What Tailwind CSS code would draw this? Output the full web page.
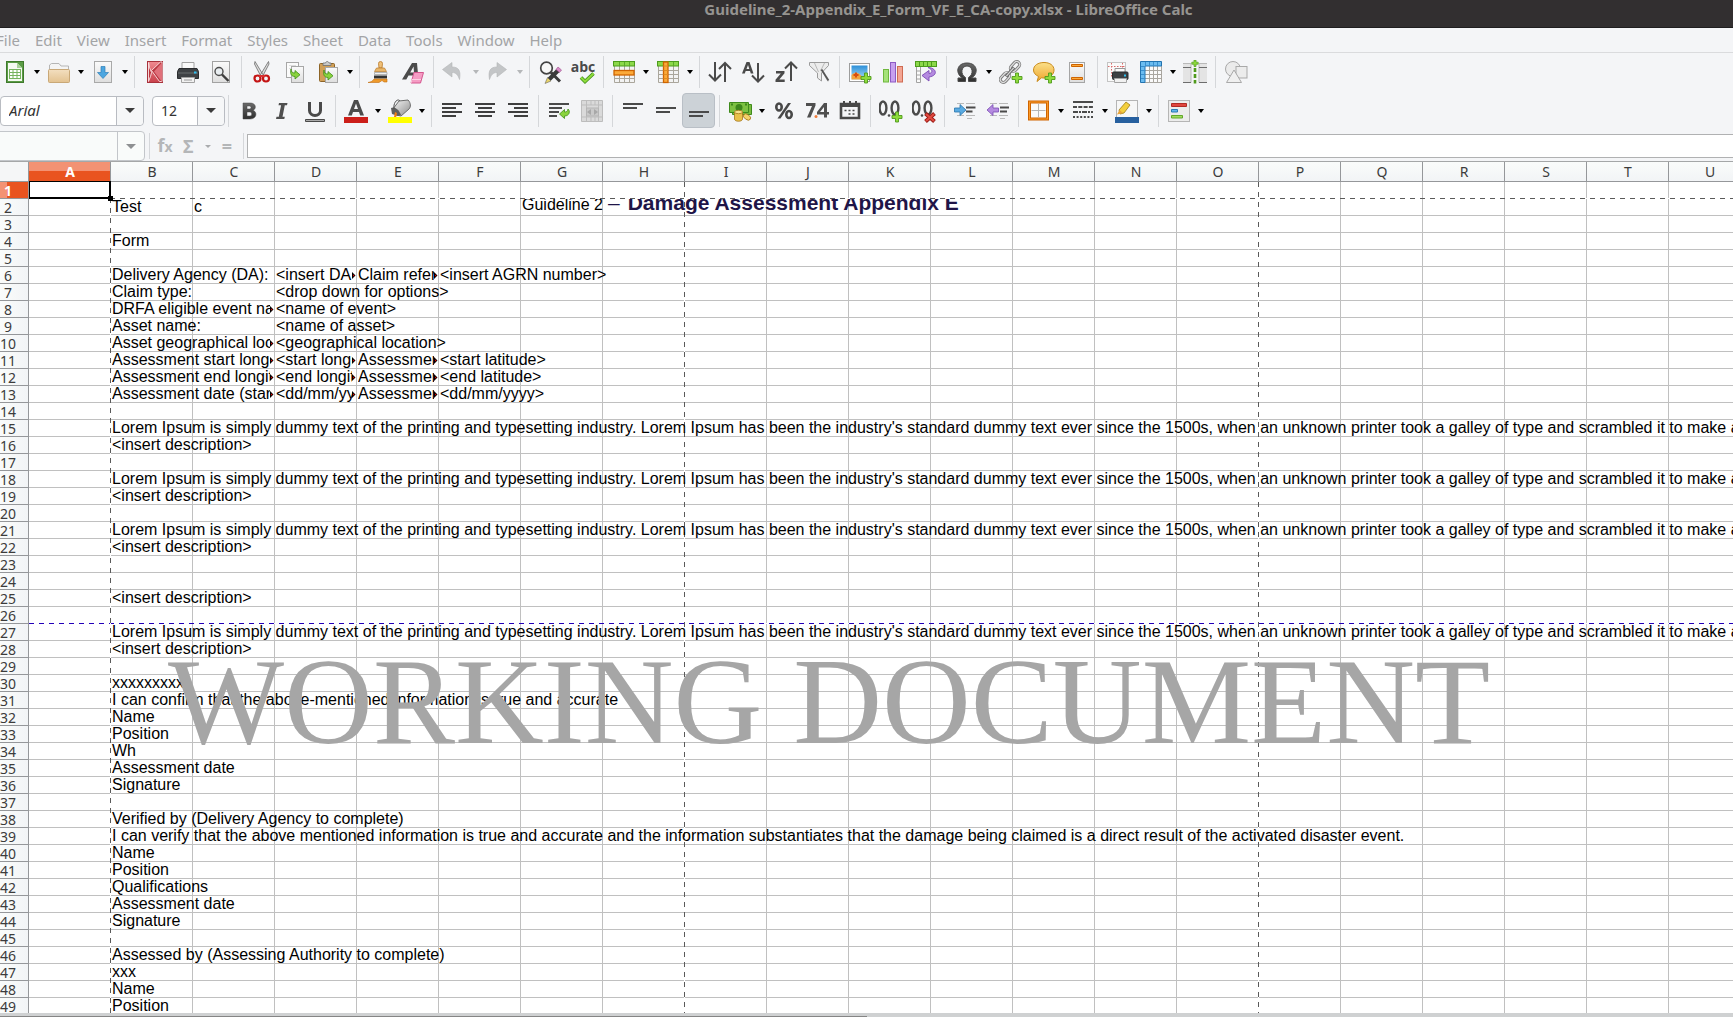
<!DOCTYPE html>
<html lang="en">
<head>
<meta charset="utf-8">
<title>Guideline_2-Appendix_E_Form_VF_E_CA-copy.xlsx - LibreOffice Calc</title>
<script src="https://cdn.jsdelivr.net/npm/@tailwindcss/browser@4"></script>
</head>
<body class="flex h-screen flex-col overflow-hidden bg-[#f4f5f7] font-['Noto_Sans',sans-serif] text-[#3c3c3c]">

<svg class="absolute size-0" aria-hidden="true">
  <defs>
    <linearGradient id="page" x1="0" y1="0" x2="0" y2="1"><stop offset="0" stop-color="#fbfbfb"/><stop offset="1" stop-color="#dedede"/></linearGradient>
    <linearGradient id="steel" x1="0" y1="0" x2="1" y2="1"><stop offset="0" stop-color="#f6f6f6"/><stop offset="1" stop-color="#8d8d8d"/></linearGradient>
    <linearGradient id="tan" x1="0" y1="0" x2="0" y2="1"><stop offset="0" stop-color="#f3dfc0"/><stop offset="1" stop-color="#e3c290"/></linearGradient>
    <linearGradient id="red" x1="0" y1="0" x2="0" y2="1"><stop offset="0" stop-color="#ef8a90"/><stop offset="1" stop-color="#c9414b"/></linearGradient>
    <linearGradient id="sky" x1="0" y1="0" x2="0" y2="1"><stop offset="0" stop-color="#2d8fd8"/><stop offset="1" stop-color="#a8dcf6"/></linearGradient>
    <linearGradient id="gold" x1="0" y1="0" x2="0" y2="1"><stop offset="0" stop-color="#fbe08a"/><stop offset="1" stop-color="#eda52c"/></linearGradient>
    <linearGradient id="ink" x1="0" y1="0" x2="0" y2="1"><stop offset="0" stop-color="#6a6a6a"/><stop offset="1" stop-color="#2e2e2e"/></linearGradient>
    <g id="plus"><path d="M3.500 0h3v3.500h3.500v3h-3.500v3.500h-3v-3.500h-3.500v-3h3.500z" fill="#8edb3c" stroke="#4f9a1c" stroke-width=".9"/></g>
    <g id="zero"><ellipse cx="4.500" cy="8" rx="3.400" ry="6.500" fill="none" stroke="#4a4a4a" stroke-width="2.400"/></g>
  </defs>

  <symbol id="i-new" viewBox="0 0 24 24"><rect x="3.500" y="1.500" width="17" height="21" fill="#5b9c46" stroke="#3f7a2c"/><path d="M5 3h9l5 5v13H5z" fill="#f5faf2"/><path d="M14 3v5h5z" fill="#a9d39a"/><rect x="6.500" y="9.500" width="11" height="9" fill="#fff" stroke="#76b35f"/><path d="M6.500 12.500h11M6.500 15.500h11M10 9.500v9M14 9.500v9" stroke="#76b35f"/></symbol>
  <symbol id="i-open" viewBox="0 0 24 24"><path d="M2.500 20V5l2-1.500H12L14 6h7.500v14z" fill="#f4f4f4" stroke="#b5b5b5"/><rect x="1.500" y="9.500" width="21" height="13" rx="1" fill="url(#tan)" stroke="#c9a877"/></symbol>
  <symbol id="i-save" viewBox="0 0 24 24"><rect x="3.500" y="1.500" width="17" height="21" fill="url(#page)" stroke="#a9a9a9"/><path d="M10 6.500h4v6h3.500L12 18.500 6.500 12.500H10z" fill="#4ca6e0" stroke="#2f7fb8" stroke-width=".7"/></symbol>
  <symbol id="i-pdf" viewBox="0 0 24 24"><rect x="4.500" y="1.500" width="15" height="21" fill="url(#red)" stroke="#a8323c"/><path d="M5.500 2.500v19l2-5 1-4-2-5zM17.500 2L8.500 10.500l8 11h2.500V2z" fill="#b93640" stroke="#fbe4e4" stroke-width=".9"/><path d="M19 2.500L11 11.500l8 10.500z" fill="#e0707a"/></symbol>
  <symbol id="i-print" viewBox="0 0 24 24"><path d="M6 10V2.500h12V10" fill="#fafafa" stroke="#a2a2a2"/><path d="M3 8.500h18l1.500 3v7h-21v-7z" fill="#3f4245" stroke="#2b2d2f"/><path d="M2 13h20" stroke="#6b6e70"/><rect x="18" y="11.500" width="2.500" height="2" fill="#2fc0f0"/><path d="M5.500 17.500h13v5h-13z" fill="#f1f1f1" stroke="#a2a2a2"/><path d="M8 20h8" stroke="#9a9a9a"/></symbol>
  <symbol id="i-preview" viewBox="0 0 24 24"><rect x="3.500" y="1.500" width="17" height="21" fill="url(#page)" stroke="#a2a2a2"/><circle cx="10" cy="11.500" r="4" fill="#e9eef1" stroke="#4c4c4c" stroke-width="1.400"/><path d="M13 14.500l6.500 6.500" stroke="#3d3d3d" stroke-width="2.400"/></symbol>
  <symbol id="i-cut" viewBox="0 0 24 24"><path d="M5 1.500l8.500 14-2.500 1L4.500 4zM18.500 1.500l-8.500 14 2.500 1L19 4z" fill="#dcdcdc" stroke="#6a6a6a" stroke-width=".8"/><circle cx="7.500" cy="18.500" r="3" fill="none" stroke="#c41414" stroke-width="2.200"/><circle cx="16" cy="18.500" r="3" fill="none" stroke="#c41414" stroke-width="2.200"/><path d="M9 15h6v2H9z" fill="#d93030"/></symbol>
  <symbol id="i-copy" viewBox="0 0 24 24"><rect x="3.500" y="2.500" width="12" height="15" fill="#fbfbfb" stroke="#a7a7a7"/><path d="M6 5.500h7M6 8.500h7" stroke="#ddd"/><rect x="8.500" y="6.500" width="12" height="16" fill="url(#page)" stroke="#a7a7a7"/><path d="M8 9c0 3 1.500 4 4 4v-2.500l5 4.300-5 4.200v-2.500c-4 0-5-3-4-7.500z" fill="#8ad33e" stroke="#3f8f16" stroke-width=".8"/></symbol>
  <symbol id="i-paste" viewBox="0 0 24 24"><rect x="3.500" y="3.500" width="15" height="18" rx="1" fill="#d19f56" stroke="#8d6427"/><path d="M7 5.500V3h2.500c.5-2 3-2 3.500 0H15v2.500z" fill="#c9c9c9" stroke="#6f6f6f" stroke-width=".8"/><rect x="9.500" y="7.500" width="12" height="15" fill="url(#page)" stroke="#a7a7a7"/><path d="M8 10c0 3 1.500 4 4 4v-2.500l5 4.300-5 4.200v-2.500c-4 0-5-3-4-7.500z" fill="#8ad33e" stroke="#3f8f16" stroke-width=".8"/></symbol>
  <symbol id="i-clone" viewBox="0 0 24 24"><path d="M11 8l-.500-4.500a2 2 0 1 1 4 0L14 8z" fill="#f0c078" stroke="#b97a2a" stroke-width=".8"/><path d="M8.500 8h8l2 3.500h-12z" fill="#e9b76b" stroke="#b97a2a" stroke-width=".7"/><path d="M6.500 12.500h12.500v2H6.500z" fill="#f2f2f2" stroke="#8a8a8a" stroke-width=".6"/><path d="M6 15.500h13v3H6z" fill="#333"/><path d="M6 19h13v3h-3l-2-1.500-3 2H0c3-.500 5-1.500 6-3.500z" fill="#ee9a2c" stroke="#c26f10" stroke-width=".6"/></symbol>
  <symbol id="i-clear" viewBox="0 0 24 24"><path d="M1 19.500L11 3h5l1.500 16.500h-4l-.3-4H7.500l-2.200 4zM9.200 12.500h3.800l-.400-6z" fill="#4b4b4b"/><path d="M13 12.500h9.500l-3 10.500H10z" fill="#f59cc4" stroke="#d4568f"/><path d="M10 23l1-3.500h9" fill="none" stroke="#fbd0e2"/></symbol>
  <symbol id="i-undo" viewBox="0 0 24 24"><path d="M.5 9.500L10 2.500V7c7 0 9 4 7.500 12.500C16 15 14 12.500 10 12.500V17z" fill="#c3c5c7" stroke="#b3b5b7" stroke-width=".6"/></symbol>
  <symbol id="i-redo" viewBox="0 0 24 24"><path d="M20.500 9.500L11 2.500V7c-7 0-9 4-7.500 12.500C5 15 7 12.500 11 12.500V17z" fill="#c3c5c7" stroke="#b3b5b7" stroke-width=".6"/></symbol>
  <symbol id="i-find" viewBox="0 0 24 24"><circle cx="8.500" cy="8" r="5.800" fill="#f7f7f7" stroke="#444" stroke-width="1.700"/><path d="M13 12.500l9 9" stroke="#3b3b3b" stroke-width="3"/><path d="M8 22.500l2-5L18.500 9l3 3-8.500 8.500z" fill="#3a3a3a"/><path d="M7 23.500l2.500-6 3.500 3.500z" fill="#e8d36a" stroke="#555" stroke-width=".5"/><path d="M18 9.500l2-2.500 3.500 3-2 2.500z" fill="#d98cc8" stroke="#9a4d8a" stroke-width=".6"/></symbol>
  <symbol id="i-spell" viewBox="0 0 24 24"><text x="12" y="12" text-anchor="middle" class="fill-[#4a4a4a] font-['Open_Sans',sans-serif] text-[14px] font-bold">abc</text><path d="M10 17.500l4 4L22.500 13.500" fill="none" stroke="#3f8f16" stroke-width="3.600"/><path d="M10 17.500l4 4L22.500 13.500" fill="none" stroke="#8edb3c" stroke-width="2"/></symbol>
  <symbol id="i-row" viewBox="0 0 24 24"><rect x="2" y="6" width="20" height="16.500" fill="#f3f3f3"/><path d="M2.500 6v16.500h20V6M2.500 18.500h20M7.500 6v16M12.500 6v16M17.500 6v16" fill="none" stroke="#aaa69c"/><rect x="1.500" y="1.500" width="21" height="4.500" fill="#8cd84a" stroke="#4c9c1c"/><path d="M7.500 2v4M12.500 2v4M17.500 2v4" stroke="#5aaa2a"/><rect x="2" y="10.500" width="20" height="4.500" fill="#fbaa3a" stroke="#cf6400" stroke-width="1.300"/></symbol>
  <symbol id="i-col" viewBox="0 0 24 24"><rect x="2" y="6" width="20" height="16.500" fill="#f3f3f3"/><path d="M2.500 6v16.500h20V6M2.500 10.500h20M2.500 14.500h20M2.500 18.500h20M17.500 6v16" fill="none" stroke="#aaa69c"/><rect x="1.500" y="1.500" width="21" height="4.500" fill="#8cd84a" stroke="#4c9c1c"/><path d="M17.500 2v4" stroke="#5aaa2a"/><rect x="7.500" y="2" width="4.500" height="20.500" fill="#fbaa3a" stroke="#cf6400" stroke-width="1.300"/><path d="M7.500 6h4.500M7.500 10.500h4.500M7.500 14.500h4.500M7.500 18.500h4.500" stroke="#e08a20"/></symbol>
  <symbol id="i-sort" viewBox="0 0 24 24"><path d="M7 2v18M1 14.500l6 6 6-6M17 22V3M11 9l6-6 6 6" fill="none" stroke="#4a4a4a" stroke-width="2"/></symbol>
  <symbol id="i-asc" viewBox="0 0 24 24"><path d="M1 13.500L5.500 2h3L12.500 13.500h-2.700l-.800-2.500H4.700l-.900 2.500zM5.500 9h2.800L7 5z" fill="#4a4a4a"/><path d="M17 3v18M11 15.500l6 6 6-6" fill="none" stroke="#4a4a4a" stroke-width="2"/></symbol>
  <symbol id="i-desc" viewBox="0 0 24 24"><path d="M2 11h8.500v2.200L5.300 19.500h5.400V22H1.500v-2.200L6.800 13.500H2z" fill="#4a4a4a"/><path d="M17 21V3M11 8.500l6-6 6 6" fill="none" stroke="#4a4a4a" stroke-width="2"/></symbol>
  <symbol id="i-filter" viewBox="0 0 24 24"><path d="M2.500 2.500h19v3L14.500 13v8l-4-3v-5L2.500 5.500z" fill="#ececec" stroke="#9b9b9b"/><path d="M7.500 3l4 9M17.500 3l-4 8M14 9l7 12.500" stroke="#b9b9b9"/><path d="M14.500 9.500l7 11" stroke="#555" stroke-width="1.800"/></symbol>
  <symbol id="i-image" viewBox="0 0 24 24"><rect x="1.500" y="3.500" width="20" height="18" fill="#fff" stroke="#9d9d9d"/><rect x="3.500" y="5.500" width="16" height="14" fill="url(#sky)"/><path d="M3.500 15c3-3 6-3 9 0s5 1 7-1v5.500h-16z" fill="#f3a43c"/><path d="M8 12.500v5M5.500 15h5" stroke="#d84e10" stroke-width="2"/><use href="#plus" x="13" y="13"/></symbol>
  <symbol id="i-chart" viewBox="0 0 24 24"><rect x="2.500" y="9.500" width="5" height="12.500" fill="#a6e27a" stroke="#6fb83e"/><rect x="9.500" y="2.500" width="5" height="19.500" fill="#c7a0ee" stroke="#8d5bc4"/><rect x="16.500" y="6.500" width="5" height="15.500" fill="#f3a593" stroke="#cf6b52"/></symbol>
  <symbol id="i-pivot" viewBox="0 0 24 24"><rect x="1.500" y="1.500" width="21" height="5" fill="#8cd84a" stroke="#4c9c1c"/><path d="M5.500 2v4M9.500 2v4M13.500 2v4M17.500 2v4" stroke="#4c9c1c"/><path d="M2.500 7v15.500h4V7M2.500 11h4M2.500 15h4M2.500 19h4" fill="#fafafa" stroke="#a2a2a2"/><path d="M14 7.500c8 0 11 8 1 9.500V21l-7-5.500 7-5v3c4-.500 4-4-1-6z" fill="#b48ae0" stroke="#7a4bb4" stroke-width=".9"/></symbol>
  <symbol id="i-omega" viewBox="0 0 24 24"><path d="M3 21.500v-3.500h4.500C0 13.500 1.500 3 12 3s12 10.500 4.500 15H21v3.500h-7.500v-4C19 14.500 18 6 12 6s-7 8.500-1.500 11.500v4z" fill="url(#ink)" stroke="#4a4a4a"/></symbol>
  <symbol id="i-link" viewBox="0 0 24 24"><g fill="none" transform="rotate(-48 11 12)"><rect x="-2" y="9" width="11" height="6" rx="3" stroke="#777" stroke-width="3"/><rect x="13" y="9" width="11" height="6" rx="3" stroke="#777" stroke-width="3"/><rect x="-2" y="9" width="11" height="6" rx="3" stroke="#ddd" stroke-width="1.300"/><rect x="13" y="9" width="11" height="6" rx="3" stroke="#ddd" stroke-width="1.300"/><path d="M5 12h12" stroke="#666" stroke-width="3.200"/><path d="M5.500 12h11" stroke="#d6d6d6" stroke-width="1.300"/></g><use href="#plus" x="13" y="13"/></symbol>
  <symbol id="i-comment" viewBox="0 0 24 24"><path d="M12 2.500c6 0 10 3 10 7.500s-4 8-10 8c-1 0-2 0-2.500-.200L5 21.500l1.500-5C3.500 15 1.500 13 1.500 10c0-4.500 4.500-7.500 10.500-7.500z" fill="url(#gold)" stroke="#c98a1b"/><use href="#plus" x="13" y="13"/></symbol>
  <symbol id="i-header" viewBox="0 0 24 24"><rect x="4.500" y="2.500" width="15" height="20" fill="url(#page)" stroke="#a5a5a5"/><path d="M6.500 4.500h11v2h-11zM6.500 17.500h11v2h-11z" fill="#fbaa3a" stroke="#cf6400"/></symbol>
  <symbol id="i-area" viewBox="0 0 24 24"><rect x="1.500" y="2.500" width="18" height="19" fill="#fafafa" stroke="#c4c4c4"/><path d="M5.500 3v15M2 6.500h17M16.500 3v5" stroke="#d86b6b" stroke-dasharray="1.500 1.500"/><path d="M9 12V8.500h10V12" fill="#fafafa" stroke="#999"/><rect x="6.500" y="12" width="15.500" height="7.500" rx="1" fill="#3d4043" stroke="#2b2d2f"/><rect x="18" y="14.500" width="2" height="2" fill="#2fc0f0"/><path d="M8.500 18.500h12v4h-12z" fill="#f1f1f1" stroke="#a2a2a2"/></symbol>
  <symbol id="i-freeze" viewBox="0 0 24 24"><rect x="6" y="6" width="16.500" height="16.500" fill="#fafafa"/><path d="M22.500 6v16.500H6M6 10.500h16.500M6 14.500h16.500M6 18.500h16.500M10.500 6v16M14.500 6v16M18.500 6v16" fill="none" stroke="#a9a6a0"/><path d="M1.500 1.500h21V6H6v16.500H1.500z" fill="#6bbcf0" stroke="#2273b0"/><path d="M6.500 2v4M10.500 2v4M14.500 2v4M18.500 2v4M2 6.500h4M2 10.500h4M2 14.500h4M2 18.500h4" stroke="#3a8fcf"/></symbol>
  <symbol id="i-split" viewBox="0 0 24 24"><path d="M0 3.500h8v19H0M24 3.500h-8v19h8" fill="#e4e4e4" stroke="#b9b9b9"/><path d="M0 7.500h8M16 7.500h8M0 22.500h8M16 22.500h8" stroke="#6d6d6d"/><path d="M11 0h2v2.200h2.200v2H13V6.500h-2V4.200H8.800v-2H11z" fill="#8edb3c" stroke="#4f9a1c" stroke-width=".7"/><path d="M12 8v15.500" stroke="#4f9a1c" stroke-width="2.600" stroke-dasharray="4 2"/></symbol>
  <symbol id="i-shapes" viewBox="0 0 24 24"><circle cx="9" cy="9" r="7.500" fill="#ebebeb" stroke="#a9a9a9"/><rect x="12" y="6.500" width="11" height="11.500" fill="#ececec" stroke="#a9a9a9"/><path d="M10 10l7.500 12.500h-15z" fill="#f0f0f0" stroke="#a9a9a9"/></symbol>

  <symbol id="i-bold" viewBox="0 0 24 24"><path d="M6 4h7c6.500 0 6.500 6 3 7.300 4.500 1.500 4 8.700-3 8.700H6zM10 7v3h2.500c2 0 2-3 0-3zM10 13v4h3c2.300 0 2.300-4 0-4z" fill="url(#ink)" stroke="#4a4a4a" stroke-width=".5" fill-rule="evenodd"/></symbol>
  <symbol id="i-italic" viewBox="0 0 24 24"><path d="M9 4h8.500l-.500 2.200h-2.200l-2.300 11.600h2.300l-.500 2.200H6l.500-2.200h2.300L11.100 6.200H8.500z" fill="#4f4f4f"/></symbol>
  <symbol id="i-underline" viewBox="0 0 24 24"><path d="M6.500 3v8.500c0 6.500 11 6.500 11 0V3" fill="none" stroke="#4a4a4a" stroke-width="3"/><path d="M2.500 20.500h19v2h-19z" fill="#aaa" stroke="#4a4a4a"/></symbol>
  <symbol id="i-fontcolor" viewBox="0 0 24 24"><path d="M4 16.500L10 1h4l6 15.500h-3.800L15 13H9l-1.200 3.500zM10 10h4l-2-5.500z" fill="#4c4c4c"/><path d="M0 18h24v6H0z" fill="#cc1f1a"/></symbol>
  <symbol id="i-highlight" viewBox="0 0 24 24"><path d="M5 10l6-8 9-1c3 3 3 7 1 9l-8 7-5-1z" fill="url(#steel)" stroke="#6c6c6c"/><path d="M3 9c3-2 8 1 10 7l-3 1-6-2z" fill="#5e5e5e"/><path d="M6 10c-1-7 4-11 6-8" fill="none" stroke="#4f4f4f"/><path d="M7 13l2 1-1 5-2-1z" fill="#f07c12"/><path d="M0 18h24v6H0z" fill="#ff0"/></symbol>
  <symbol id="i-left" viewBox="0 0 24 24"><path d="M2 5h20M2 9h14M2 13h20M2 17h14" stroke="#3f3f3f" stroke-width="2"/></symbol>
  <symbol id="i-center" viewBox="0 0 24 24"><path d="M2 5h20M5 9h14M2 13h20M5 17h14" stroke="#3f3f3f" stroke-width="2"/></symbol>
  <symbol id="i-right" viewBox="0 0 24 24"><path d="M2 5h20M8 9h14M2 13h20M8 17h14" stroke="#3f3f3f" stroke-width="2"/></symbol>
  <symbol id="i-wrap" viewBox="0 0 24 24"><path d="M2 5h20M2 9h13M2 13h10M2 17h8" stroke="#4a4a4a" stroke-width="2"/><path d="M12.500 15l5-4.500V13c2 0 3-.500 3.500-3 2.500 2 1.500 7-3.500 7v2.500z" fill="#8ad33e" stroke="#3f8f16" stroke-width=".8"/></symbol>
  <symbol id="i-merge" viewBox="0 0 24 24"><path d="M1.500 1.500h21v21h-21z" fill="#dadada" stroke="#bdbdbd"/><path d="M1.500 6h21M1.500 18h21M6.500 2v20M11 2v4M15 2v4M18.500 2v20M11 18v4M15 18v4" stroke="#bdbdbd"/><path d="M6.500 9h12v8h-12z" fill="#c9c9c9" stroke="#b5b5b5"/><path d="M11 10v6l-4-3zM14 10v6l4-3z" fill="#a8a8a8"/></symbol>
  <symbol id="i-top" viewBox="0 0 24 24"><path d="M2 5h20M2 9h14" stroke="#4a4a4a" stroke-width="2"/></symbol>
  <symbol id="i-middle" viewBox="0 0 24 24"><path d="M2 9h20M2 13h14" stroke="#4a4a4a" stroke-width="2"/></symbol>
  <symbol id="i-bottom" viewBox="0 0 24 24"><path d="M2 13h20M2 17h14" stroke="#4a4a4a" stroke-width="2"/></symbol>
  <symbol id="i-currency" viewBox="0 0 24 24"><path d="M4.500 5.500h19v10h-19z" fill="#79bb3e" stroke="#3e8a1b"/><path d="M1.500 3.500h19v10h-19z" fill="#7cc142" stroke="#3e8a1b"/><circle cx="11" cy="8.500" r="3.500" fill="#3d861c"/><path d="M3 5.500h2M17 5.500h2" stroke="#3d861c" stroke-width="2"/><path d="M6.500 13v7c0 3 8 3 8 0v-7z" fill="#e9c14a" stroke="#a5761a" stroke-width=".8"/><ellipse cx="10.500" cy="13" rx="4" ry="1.700" fill="#f8e28e" stroke="#a5761a" stroke-width=".8"/><ellipse cx="19" cy="18" rx="4" ry="2.500" transform="rotate(35 19 18)" fill="#f3d36a" stroke="#a5761a" stroke-width=".8"/></symbol>
  <symbol id="i-percent" viewBox="0 0 24 24"><g fill="none" stroke="#484848" stroke-width="2.600"><ellipse cx="7" cy="8" rx="2.700" ry="3.500"/><ellipse cx="17" cy="15.500" rx="2.700" ry="3.500"/></g><path d="M16 4h3L8.500 19.500h-3z" fill="#484848"/></symbol>
  <symbol id="i-number" viewBox="0 0 24 24"><path d="M1 4h9.500v2.500L5.500 18.500H2L7 7H1zM19 4h3v9h2v2.500h-2v3h-3v-3h-7V13zm0 4l-4 5h4z" fill="#4f4f4f"/><circle cx="11" cy="17.500" r="1.500" fill="#f07c3a"/></symbol>
  <symbol id="i-date" viewBox="0 0 24 24"><path d="M3 5h18v14H3z" fill="#f4f5f7" stroke="#484848" stroke-width="2.600"/><path d="M2 4h20v4H2z" fill="#484848"/><path d="M6 2v4M12 2v4M18 2v4" stroke="#484848" stroke-width="2"/><path d="M6.500 11.500h2M10.500 11.500h2M14.500 11.500h2M10.500 15h2M14.500 15h2" stroke="#484848" stroke-width="1.700"/></symbol>
  <symbol id="i-adddec" viewBox="0 0 24 24"><use href="#zero" x="-.500" y="1"/><use href="#zero" x="11.500" y="1"/><circle cx="10" cy="16.500" r="1.300" fill="#4a4a4a"/><use href="#plus" x="13" y="13"/></symbol>
  <symbol id="i-deldec" viewBox="0 0 24 24"><use href="#zero" x="-.500" y="1"/><use href="#zero" x="11.500" y="1"/><circle cx="10" cy="16.500" r="1.300" fill="#4a4a4a"/><path d="M13.500 14.500l9 8M22.500 14.500l-9 8" stroke="#9a1a14" stroke-width="4"/><path d="M14 15l8 7M22 15l-8 7" stroke="#e04a40" stroke-width="2.200"/></symbol>
  <symbol id="i-indent" viewBox="0 0 24 24"><path d="M4 4.500h7M13 4.500h9M4 16.500h7M13 16.500h9M14 19.500h5" stroke="#b9b9b9"/><path d="M13 8.500h9.500M13 12.500h6.500" stroke="#4a4a4a" stroke-width="2"/><path d="M1.500 9h5.500V5.500l6 5.500-6 5.500V13H1.500z" fill="#5aabe2" stroke="#2873ac" stroke-width=".8"/></symbol>
  <symbol id="i-outdent" viewBox="0 0 24 24"><path d="M4 4.500h7M13 4.500h9M4 16.500h7M13 16.500h9M14 19.500h5" stroke="#b9b9b9"/><path d="M14 8.500h9M14 12.500h7" stroke="#4a4a4a" stroke-width="2"/><path d="M12.500 9H7V5.500L1 11l6 5.500V13h5.500z" fill="#b48ae0" stroke="#7a4bb4" stroke-width=".8"/></symbol>
  <symbol id="i-borders" viewBox="0 0 24 24"><rect x="2.500" y="3" width="18" height="17" fill="#fafafa" stroke="#cf6400" stroke-width="3"/><rect x="2.500" y="3" width="18" height="17" fill="none" stroke="#fb9a2a"/><path d="M11.500 5v13M4.500 11.500h14" stroke="#b5b5b5"/></symbol>
  <symbol id="i-lines" viewBox="0 0 24 24"><path d="M2 3h20" stroke="#4a4a4a" stroke-width="2"/><path d="M2 8h20" stroke="#4a4a4a" stroke-width="2" stroke-dasharray="4 1.300"/><path d="M2 13h20" stroke="#4a4a4a" stroke-width="2" stroke-dasharray="5 1 2 1"/><path d="M2 18h20" stroke="#4a4a4a" stroke-width="2" stroke-dasharray="2 1.600"/></symbol>
  <symbol id="i-bordercolor" viewBox="0 0 24 24"><rect x="1.500" y="1.500" width="21" height="17" fill="#f7f7f7" stroke="#b5b5b5"/><path d="M4 11L11 3l4 3-6 8-4 1z" fill="#f3cf3e" stroke="#9d7c16" stroke-width=".8"/><path d="M2 15.500l2.500-4.500 3.500 3z" fill="#e8a33a"/><path d="M0 18h24v6H0z" fill="#27609f"/></symbol>
  <symbol id="i-cond" viewBox="0 0 24 24"><rect x="1.500" y="1.500" width="21" height="21" fill="#ececec" stroke="#b5b5b5"/><path d="M4.500 4.500h15v3h-15z" fill="#e0463e" stroke="#b02a24"/><path d="M4.500 10.500h6v2.500h-6z" fill="#62b6ec" stroke="#2a7ab4"/><path d="M4.500 16.500h11v2.500h-11z" fill="#a0dc5e" stroke="#62a82a"/></symbol>
</svg>

<header class="shrink-0">
  <h1 class="h-7 overflow-hidden border-b border-[#1f1e1f] bg-[#322f30] pl-41 text-center text-[15px] leading-[18px] font-bold text-[#969490]">Guideline_2-Appendix_E_Form_VF_E_CA-copy.xlsx - LibreOffice Calc</h1>
  <nav id="menu" class="-ml-1 flex h-[25px] items-center gap-[15px] border-b border-[#dadbdd] text-[15px] leading-5 text-[#a3a4a6]" aria-label="Main menu"></nav>
</header>

<div id="standard" class="-ml-0.5 flex h-[39px] shrink-0 items-center pb-0.5" role="toolbar" aria-label="Standard"></div>

<div class="flex h-[39px] shrink-0 items-center pb-0.5" role="toolbar" aria-label="Formatting">
  <label class="relative flex h-[30px] w-36 items-stretch rounded border border-[#b9bcc2] bg-white">
    <span class="sr-only">Font name</span>
    <select class="w-full appearance-none bg-transparent pl-2 text-[15px] text-[#333] italic"><option>Arial</option></select>
    <span class="pointer-events-none absolute inset-y-0 right-0 flex w-[27px] items-center justify-center rounded-r border-l border-[#b9bcc2] bg-[#f6f7f8]"><svg class="h-[5px] w-[10px]" viewBox="0 0 10 5" aria-hidden="true"><path d="M0 0h10L5 5z" fill="#3c3c3c"/></svg></span>
  </label>
  <label class="relative ml-2 flex h-[30px] w-[73px] items-stretch rounded border border-[#b9bcc2] bg-white">
    <span class="sr-only">Font size</span>
    <select class="w-full appearance-none bg-transparent pl-2 text-[14px] text-[#333]"><option>12</option></select>
    <span class="pointer-events-none absolute inset-y-0 right-0 flex w-[27px] items-center justify-center rounded-r border-l border-[#b9bcc2] bg-[#f6f7f8]"><svg class="h-[5px] w-[10px]" viewBox="0 0 10 5" aria-hidden="true"><path d="M0 0h10L5 5z" fill="#3c3c3c"/></svg></span>
  </label>
  <div id="formatting" class="-ml-px flex items-center"></div>
</div>

<div class="flex h-[30px] shrink-0 items-center text-[#b4b6b8]">
  <label class="relative -ml-1 flex h-[30px] w-[149px] items-stretch rounded border border-[#c3c6ca] bg-[#f9fbfa]">
    <span class="sr-only">Name box</span>
    <input class="w-full bg-transparent pl-2 text-[14px]" type="text">
    <span class="pointer-events-none absolute inset-y-0 right-0 flex w-[27px] items-center justify-center border-l border-[#c3c6ca]"><svg class="h-[5px] w-[10px]" viewBox="0 0 10 5" aria-hidden="true"><path d="M0 0h10L5 5z" fill="#8e9092"/></svg></span>
  </label>
  <span class="ml-1 h-[26px] w-px bg-[#d5d7da]"></span>
  <button type="button" aria-label="Function wizard" class="ml-[7px] w-4 text-center text-[18px] leading-5 font-bold">f<span class="text-[14px]">x</span></button>
  <button type="button" aria-label="Select function" class="ml-2.5 flex w-[28px] items-center justify-between"><span class="text-[18px] leading-5 font-bold">Σ</span><svg class="h-[3px] w-[6px]" viewBox="0 0 6 3" aria-hidden="true"><path d="M0 0h6L3 3z" fill="#a9abad"/></svg></button>
  <button type="button" aria-label="Formula" class="ml-2 w-4 text-center text-[18px] leading-5 font-bold">=</button>
  <span class="ml-2 h-[26px] w-px bg-[#d5d7da]"></span>
  <input class="ml-[3px] h-6 min-w-0 flex-1 border-y border-l border-[#b0b1b2] bg-white px-1 text-[14px] text-black" type="text" aria-label="Input line">
</div>

<main class="relative min-h-0 flex-1 overflow-hidden border-t border-[#a5a7a8] bg-white">
  <div class="absolute top-[36px] right-0 left-[110px] h-px bg-white bg-[repeating-linear-gradient(90deg,#5a5a5a_0_5px,transparent_5px_10px)]"></div>
  <div class="absolute top-[461px] right-0 left-[29px] h-px bg-white bg-[repeating-linear-gradient(90deg,#2200b8_0_5px,transparent_5px_10px)]"></div>
  <div class="absolute top-[36px] bottom-0 left-[110px] w-px bg-white bg-[repeating-linear-gradient(#5a5a5a_0_5px,transparent_5px_10px)]"></div>
  <div class="absolute top-[20px] bottom-0 left-[684px] w-px bg-white bg-[repeating-linear-gradient(#5a5a5a_0_5px,transparent_5px_10px)]"></div>
  <div class="absolute top-[20px] bottom-0 left-[1258px] w-px bg-white bg-[repeating-linear-gradient(#5a5a5a_0_5px,transparent_5px_10px)]"></div>
  <table id="grid" class="w-[1751px] table-fixed border-separate border-spacing-0 font-['Liberation_Sans',Arial,sans-serif] text-[16px] leading-4 text-black"></table>
  <div class="absolute top-[470px] left-[168px] font-['Liberation_Serif',serif] text-[123px] leading-[140px] whitespace-nowrap text-[#a6a6a6]">WORKING DOCUMENT</div>
</main>

<div class="flex h-1 shrink-0 items-end bg-[#cfd1d2]" role="scrollbar" aria-label="Horizontal scroll" aria-controls="grid" aria-valuenow="0">
  <span class="h-px w-1/2 bg-[#858585]"></span>
</div>

<script>
document.getElementById('menu').innerHTML =
  ['File','Edit','View','Insert','Format','Styles','Sheet','Data','Tools','Window','Help']
    .map(t => `<button type="button">${t}</button>`).join('');

// Toolbar items: "name" is a plain button, "name+" has a drop-down arrow, "|" is a separator.
const off = new Set(['undo','redo','merge']);
function toolbar(id, spec) {
  document.getElementById(id).innerHTML = spec.split(' ').map(s => {
    if (s === '|') return '<span class="flex h-8 w-2 shrink-0 justify-center"><span class="w-px bg-[#d5d7da]"></span></span>';
    const drop = s.endsWith('+'), n = s.replace('+', '');
    const on = n === 'bottom' ? 'rounded border border-[#b9bfc6] bg-[#ccd2d7]' : '';
    const arrow = `<button type="button" aria-label="${n} options" class="flex h-8 w-[11px] shrink-0 items-center justify-center"><svg class="h-1 w-[6px]" viewBox="0 0 6 4" aria-hidden="true"><path d="M0 0h6L3 4z" fill="${off.has(n) ? '#b5b7b9' : '#000'}"/></svg></button>`;
    return `<button type="button" aria-label="${n}" class="flex h-[35px] w-[33px] shrink-0 items-center justify-center ${on}"><svg class="size-6" aria-hidden="true"><use href="#i-${n}"/></svg></button>${drop ? arrow : ''}`;
  }).join('');
}
toolbar('standard', 'new+ open+ save+ | pdf print preview | cut copy paste+ | clone clear | undo+ redo+ | find spell | row+ col+ | sort asc desc filter | image chart pivot | omega+ link comment header | area freeze+ split | shapes');
toolbar('formatting', '| bold italic underline | fontcolor+ highlight+ | left center right | wrap merge | top middle bottom | currency+ percent number date | adddec deldec | indent outdent | borders+ lines+ bordercolor+ | cond+');

const lorem = "Lorem Ipsum is simply dummy text of the printing and typesetting industry. Lorem Ipsum has been the industry's standard dummy text ever since the 1500s, when an unknown printer took a galley of type and scrambled it to make a type specimen book.";
const desc = '<insert description>';
const cells = {
  B2:'Test', C2:'c', B4:'Form',
  B6:'Delivery Agency (DA):', D6:'<insert DA name>', E6:'Claim reference:', F6:'<insert AGRN number>',
  B7:'Claim type:', D7:'<drop down for options>',
  B8:'DRFA eligible event name:', D8:'<name of event>',
  B9:'Asset name:', D9:'<name of asset>',
  B10:'Asset geographical location:', D10:'<geographical location>',
  B11:'Assessment start longitude:', D11:'<start longitude>', E11:'Assessment start', F11:'<start latitude>',
  B12:'Assessment end longitude:', D12:'<end longitude>', E12:'Assessment end', F12:'<end latitude>',
  B13:'Assessment date (start):', D13:'<dd/mm/yyyy>', E13:'Assessment date', F13:'<dd/mm/yyyy>',
  B15:lorem, B16:desc, B18:lorem, B19:desc, B21:lorem, B22:desc, B25:desc, B27:lorem, B28:desc,
  B30:'xxxxxxxxx', B31:'I can confirm that the above-mentioned information is true and accurate',
  B32:'Name', B33:'Position', B34:'Wh', B35:'Assessment date', B36:'Signature',
  B38:'Verified by (Delivery Agency to complete)',
  B39:'I can verify that the above mentioned information is true and accurate and the information substantiates that the damage being claimed is a direct result of the activated disaster event.',
  B40:'Name', B41:'Position', B42:'Qualifications', B43:'Assessment date', B44:'Signature',
  B46:'Assessed by (Assessing Authority to complete)', B47:'xxx', B48:'Name', B49:'Position'
};
const clipWide = new Set(['B8','B10','B11','B12','B13']);
const clipOne = new Set(['D6','E6','D11','E11','D12','E12','D13','E13']);
const esc = s => s.replace(/</g, '&lt;').replace(/>/g, '&gt;');
// Marker at a cell's right edge: the text goes on beyond it.
const clipped = t => `<span class="min-w-0 flex-1 overflow-hidden">${esc(t)}</span><svg class="mt-[5px] h-[7px] w-1 shrink-0" viewBox="0 0 4 7" aria-hidden="true"><path d="M0 0l3.500 3.500L0 7z" fill="#000"/><path d="M1 2.500l1.500 1L1 4.500z" fill="#e00"/></svg>`;

function cell(ref) {
  if (ref === 'A1') return '<span class="relative block h-4"><span class="absolute -top-px -right-px -bottom-px left-0 border border-r-2 border-b-2 border-black"></span><span class="absolute -right-[3px] -bottom-[3px] size-[5px] bg-black"></span></span>';
  if (ref === 'G2') return '<span class="relative flex h-4 w-[450px] items-baseline overflow-hidden pl-px leading-2 whitespace-nowrap"><span class="w-[86px]">Guideline 2</span><span class="mr-2 text-[21px] text-[#1f1548]">–</span><span class="text-[21px] font-bold text-[#1f1548]">Damage Assessment Appendix E</span></span>';
  const t = cells[ref];
  if (!t) return '';
  if (clipWide.has(ref)) return `<span class="relative flex h-4 w-[163px] pl-px whitespace-nowrap">${clipped(t)}</span>`;
  if (clipOne.has(ref)) return `<span class="relative flex h-4 w-[81px] pl-px whitespace-nowrap">${clipped(t)}</span>`;
  return `<span class="relative block h-4 pl-px whitespace-nowrap">${esc(t)}</span>`;
}

const cols = 'ABCDEFGHIJKLMNOPQRSTU'.split('');
const head = "border-r border-b border-[#95979a] py-0 pr-0 font-['Noto_Sans',sans-serif] text-[14px] font-normal";
let html = '<colgroup><col class="w-[29px]">' + cols.map(() => '<col class="w-[82px]">').join('') + '</colgroup>';
html += `<thead><tr class="h-5"><th class="${head} bg-[#f5f6f7]"></th>` + cols.map(c => c === 'A'
  ? `<th scope="col" class="${head} bg-linear-to-b from-[#f39273] from-50% to-[#e95420] to-50% pl-px text-white"><b>A</b></th>`
  : `<th scope="col" class="${head} bg-linear-to-b from-[#fafcfb] to-[#f2f4f6] pl-px text-[#3c3c3c]">${c}</th>`).join('') + '</tr></thead><tbody>';
for (let r = 1; r <= 49; r++) {
  html += `<tr class="h-[17px]"><th scope="row" class="${head} pl-0 ${r === 1 ? 'bg-linear-to-r from-[#f39273] from-25% to-[#e95420] to-25% text-white' : 'bg-linear-to-r from-[#fafcfb] to-[#f2f4f6] text-[#3c3c3c]'}"><span class="block h-4 w-4 text-center leading-[18px]">${r === 1 ? '<b>1</b>' : r}</span></th>`;
  html += cols.map(c => `<td class="border-r border-b border-[#c0c0c0] p-0 align-top">${cell(c + r)}</td>`).join('') + '</tr>';
}
document.getElementById('grid').innerHTML = html + '</tbody>';
</script>
</body>
</html>
